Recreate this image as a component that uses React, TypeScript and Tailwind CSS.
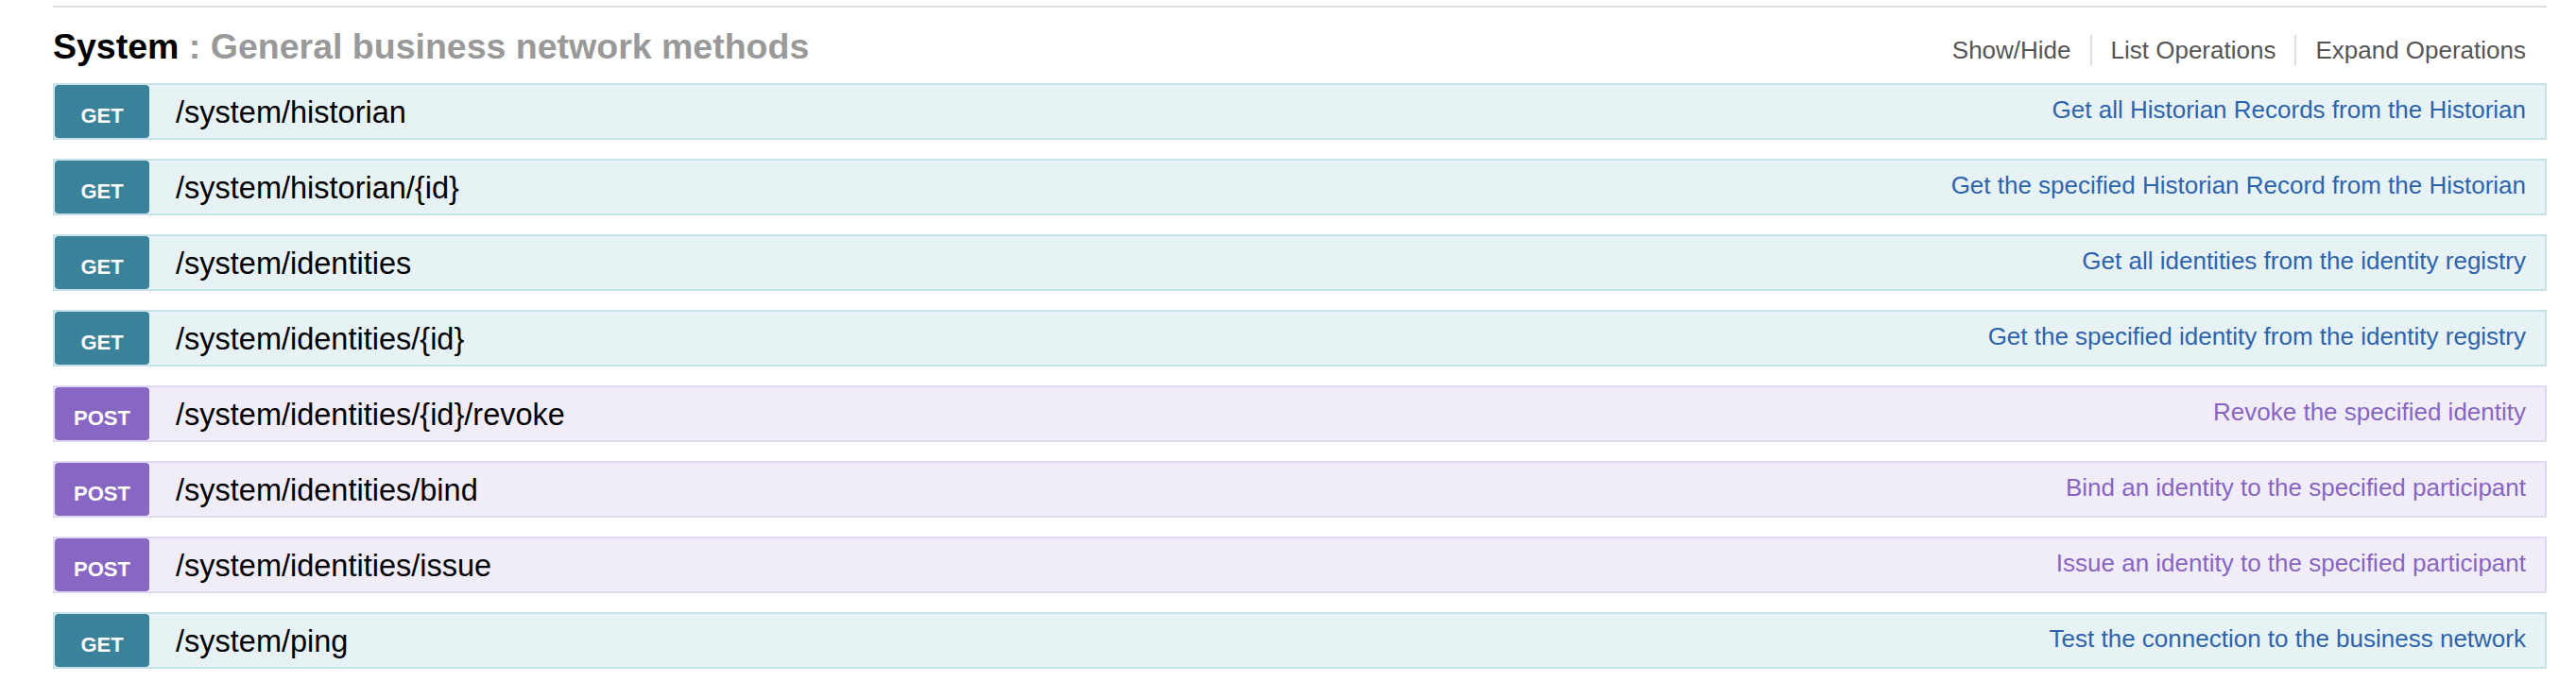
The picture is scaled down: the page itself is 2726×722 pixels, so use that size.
const font = { fontFamily: '"Liberation Sans", Arial, Helvetica, sans-serif' };

/** Operations of the System resource */
const operations = [
  { method: 'GET', path: '/system/historian', summary: 'Get all Historian Records from the Historian' },
  { method: 'GET', path: '/system/historian/{id}', summary: 'Get the specified Historian Record from the Historian' },
  { method: 'GET', path: '/system/identities', summary: 'Get all identities from the identity registry' },
  { method: 'GET', path: '/system/identities/{id}', summary: 'Get the specified identity from the identity registry' },
  { method: 'POST', path: '/system/identities/{id}/revoke', summary: 'Revoke the specified identity' },
  { method: 'POST', path: '/system/identities/bind', summary: 'Bind an identity to the specified participant' },
  { method: 'POST', path: '/system/identities/issue', summary: 'Issue an identity to the specified participant' },
  { method: 'GET', path: '/system/ping', summary: 'Test the connection to the business network' },
];

const methodStyle: Record<string, { row: string; badge: string; summary: string }> = {
  GET: {
    row: 'border-[#c6e1e8] bg-[#e7f2f5]',
    badge: 'bg-[#39829a]',
    summary: 'text-[#2d64ad]',
  },
  POST: {
    row: 'border-[#e1d8f1] bg-[#f1edf8]',
    badge: 'bg-[#8866c4]',
    summary: 'text-[#8865c3]',
  },
};

function Operation({ method, path, summary }: { method: string; path: string; summary: string }) {
  const s = methodStyle[method];
  return (
    <li className={`flex h-[60px] items-center border-2 ${s.row}`}>
      <span
        className={`flex h-[56px] w-[100px] shrink-0 items-center justify-center rounded-[4px] pt-[9px] text-[22px] font-bold leading-none text-white ${s.badge}`}
      >
        {method}
      </span>
      <span className="ml-[28px] pt-[2px] text-[32.5px] leading-none text-black">{path}</span>
      <span className={`ml-auto pr-[20px] pb-[4px] text-[26px] leading-none ${s.summary}`}>{summary}</span>
    </li>
  );
}

export default function App() {
  return (
    <div className="min-h-[722px] bg-white pt-[6px] pr-[31px] pl-[56px]" style={font}>
      <div className="border-t-2 border-[#ddd]">
        <div className="flex h-[80px] items-baseline justify-between pt-[23px]">
          <h2 className="text-[37.5px] leading-none font-bold text-[#999]">
            <span className="text-black">System</span> : General business network methods
          </h2>
          <ul className="flex items-baseline pr-[22px] text-[26px] leading-[32px] text-[#555]">
            <li className="border-r-2 border-[#ddd] pr-[20px]">Show/Hide</li>
            <li className="border-r-2 border-[#ddd] px-[20px]">List Operations</li>
            <li className="pl-[20px]">Expand Operations</li>
          </ul>
        </div>
        <ul className="flex flex-col gap-[20px]">
          {operations.map((op) => (
            <Operation key={op.path} {...op} />
          ))}
        </ul>
      </div>
    </div>
  );
}
